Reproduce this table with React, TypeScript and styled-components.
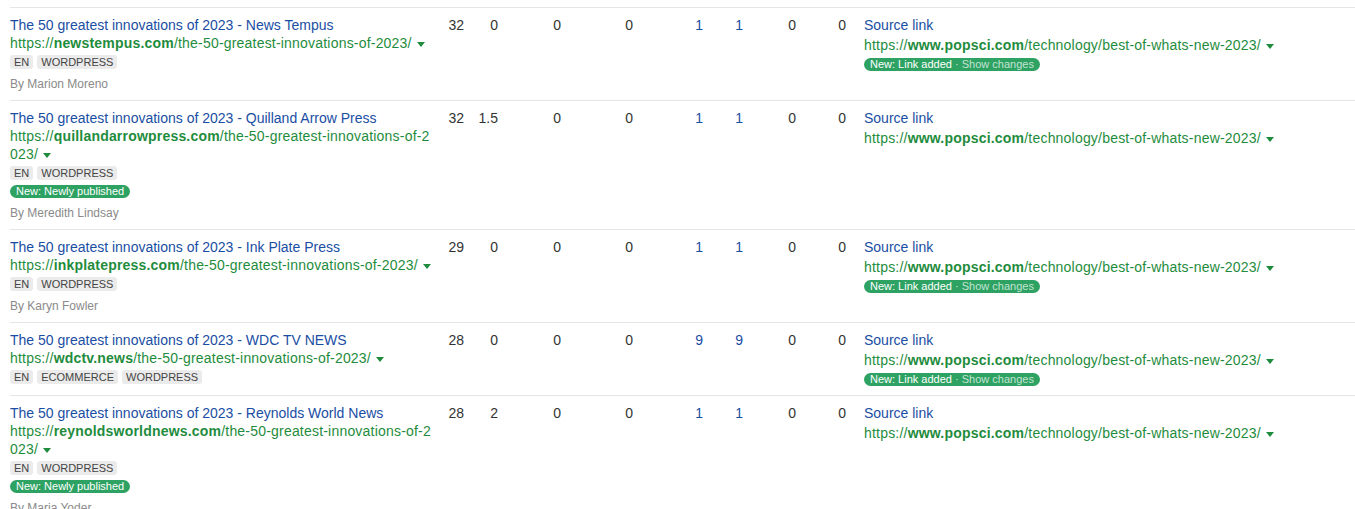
import React from 'react';
import styled, { createGlobalStyle } from 'styled-components';

const GlobalStyle = createGlobalStyle`
  body {
    margin: 0;
    background: #ffffff;
    font-family: "Liberation Sans", Arial, sans-serif;
  }
`;

const Table = styled.div`
  padding-top: 7px;
  margin-left: 10px;
`;

const Row = styled.div`
  display: grid;
  grid-template-columns: 428px 32px 34px 63px 72px 70px 40px 53px 50px 1fr;
  border-top: 1px solid #e6e6e6;
  padding: 8px 0 7px;
`;

const MainCell = styled.div`
  display: flex;
  flex-direction: column;
  align-items: flex-start;
  min-width: 0;
  padding-right: 4px;
`;

const Title = styled.a`
  font-size: 14px;
  line-height: 18px;
  color: #1a4ea3;
  text-decoration: none;
`;

const Url = styled.div`
  font-size: 14px;
  line-height: 18px;
  letter-spacing: 0.2px;
  color: #1f8c3d;
  word-break: break-all;

  b {
    font-weight: 700;
  }
`;

const Caret = styled.span`
  display: inline-block;
  width: 0;
  height: 0;
  margin-left: 5px;
  vertical-align: middle;
  border-left: 4px solid transparent;
  border-right: 4px solid transparent;
  border-top: 5px solid #1f8c3d;
`;

const Tags = styled.div`
  display: flex;
  gap: 4px;
  margin-top: 3px;
`;

const Tag = styled.span`
  font-size: 11px;
  line-height: 14px;
  padding: 0 4px;
  background: #ebebeb;
  color: #444;
  border-radius: 3px;
  text-transform: uppercase;
`;

const Badge = styled.span<{ $top?: number }>`
  display: inline-block;
  margin-top: ${p => p.$top ?? 5}px;
  font-size: 11px;
  line-height: 13px;
  padding: 0 6px;
  background: #2ea263;
  color: #fff;
  border-radius: 7px;
  white-space: nowrap;
`;

const Muted = styled.span`
  color: rgba(255, 255, 255, 0.72);
`;

const Author = styled.div`
  margin-top: 6px;
  font-size: 12px;
  line-height: 18px;
  color: #8a8a8a;
`;

const Num = styled.div<{ $link?: boolean }>`
  font-size: 14px;
  line-height: 18px;
  text-align: right;
  padding-right: 6px;
  color: ${p => (p.$link ? '#1a4ea3' : '#333')};
`;

const SourceCell = styled.div`
  padding: 0 0 2px 12px;
  display: flex;
  flex-direction: column;
  align-items: flex-start;
`;

const SourceUrl = styled(Url)`
  margin-top: 2px;
  white-space: nowrap;
`;

type Item = {
  title: string;
  domain: string;
  tags: string[];
  newly?: boolean;
  author?: string;
  nums: string[];
  linkAdded?: boolean;
};

const path = '/the-50-greatest-innovations-of-2023/';

const items: Item[] = [
  {
    title: 'The 50 greatest innovations of 2023 - News Tempus',
    domain: 'newstempus.com',
    tags: ['EN', 'WordPress'],
    author: 'By Marion Moreno',
    nums: ['32', '0', '0', '0', '1', '1', '0', '0'],
    linkAdded: true,
  },
  {
    title: 'The 50 greatest innovations of 2023 - Quilland Arrow Press',
    domain: 'quillandarrowpress.com',
    tags: ['EN', 'WordPress'],
    newly: true,
    author: 'By Meredith Lindsay',
    nums: ['32', '1.5', '0', '0', '1', '1', '0', '0'],
  },
  {
    title: 'The 50 greatest innovations of 2023 - Ink Plate Press',
    domain: 'inkplatepress.com',
    tags: ['EN', 'WordPress'],
    author: 'By Karyn Fowler',
    nums: ['29', '0', '0', '0', '1', '1', '0', '0'],
    linkAdded: true,
  },
  {
    title: 'The 50 greatest innovations of 2023 - WDC TV NEWS',
    domain: 'wdctv.news',
    tags: ['EN', 'Ecommerce', 'WordPress'],
    nums: ['28', '0', '0', '0', '9', '9', '0', '0'],
    linkAdded: true,
  },
  {
    title: 'The 50 greatest innovations of 2023 - Reynolds World News',
    domain: 'reynoldsworldnews.com',
    tags: ['EN', 'WordPress'],
    newly: true,
    author: 'By Maria Yoder',
    nums: ['28', '2', '0', '0', '1', '1', '0', '0'],
  },
];

const App: React.FC = () => (
  <>
    <GlobalStyle />
    <Table>
      {items.map(item => (
        <Row key={item.domain}>
          <MainCell>
            <Title href="#">{item.title}</Title>
            <Url>
              https://<b>{item.domain}</b>
              {path}
              <Caret />
            </Url>
            <Tags>
              {item.tags.map(t => (
                <Tag key={t}>{t}</Tag>
              ))}
            </Tags>
            {item.newly && <Badge>New: Newly published</Badge>}
            {item.author && <Author>{item.author}</Author>}
          </MainCell>
          {item.nums.map((n, i) => (
            <Num key={i} $link={i === 4 || i === 5}>
              {n}
            </Num>
          ))}
          <SourceCell>
            <Title href="#">Source link</Title>
            <SourceUrl>
              https://<b>www.popsci.com</b>/technology/best-of-whats-new-2023/
              <Caret />
            </SourceUrl>
            {item.linkAdded && (
              <Badge $top={4}>
                New: Link added <Muted>· Show changes</Muted>
              </Badge>
            )}
          </SourceCell>
        </Row>
      ))}
    </Table>
  </>
);

export default App;
